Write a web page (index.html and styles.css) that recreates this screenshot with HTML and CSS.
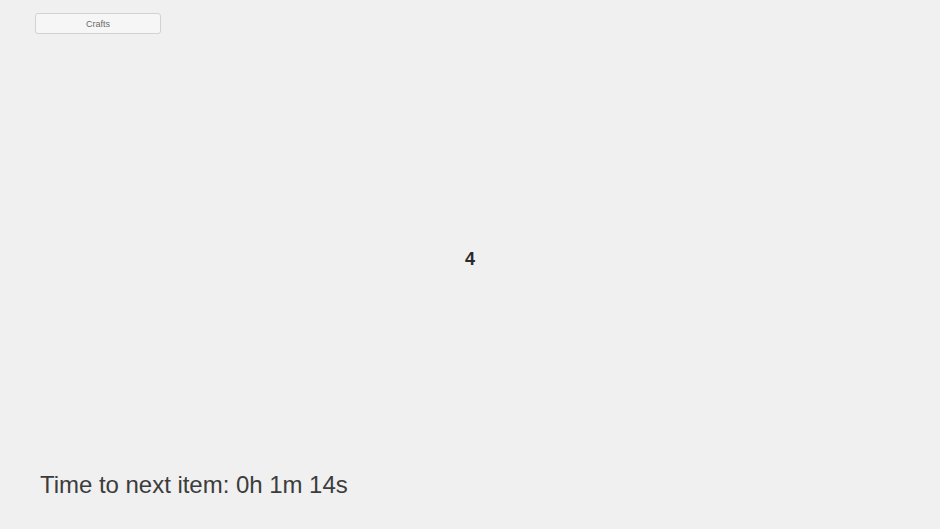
FILE: index.html
```html
<!DOCTYPE html>
<html>
<head>
<meta charset="utf-8">
<link rel="stylesheet" href="styles.css">
</head>
<body>
<div class="page">
  <header class="top">
    <button class="btn">Crafts</button>
  </header>
  <main class="center">
    <div class="count">4</div>
  </main>
  <footer class="bottom">
    <div class="timer">Time to next item: 0h 1m 14s</div>
  </footer>
</div>
</body>
</html>
```

FILE: styles.css
```css
html, body {
  margin: 0;
  padding: 0;
  background: #f0f0f0;
}
.page {
  width: 940px;
  height: 529px;
  display: flex;
  flex-direction: column;
  font-family: "Liberation Sans", Arial, sans-serif;
  box-sizing: border-box;
}
.top {
  padding: 13px 0 0 35px;
}
.btn {
  display: block;
  width: 126px;
  height: 21px;
  padding: 1px 0 0 0;
  margin: 0;
  border: 1px solid #d2d2d2;
  border-radius: 3px;
  background: #f6f6f6;
  color: #6a6a6a;
  font-family: "Liberation Sans", Arial, sans-serif;
  font-size: 9px;
  line-height: 18px;
  text-align: center;
  box-sizing: border-box;
}
.center {
  flex: 1;
  display: flex;
  align-items: center;
  justify-content: center;
  padding-top: 14px;
}
.count {
  font-size: 18px;
  font-weight: bold;
  color: #2a2a2a;
  line-height: 21px;
}
.bottom {
  padding: 0 0 30px 40px;
}
.timer {
  font-size: 24px;
  line-height: 28px;
  color: #3c3c3c;
  letter-spacing: -0.03px;
}
```
